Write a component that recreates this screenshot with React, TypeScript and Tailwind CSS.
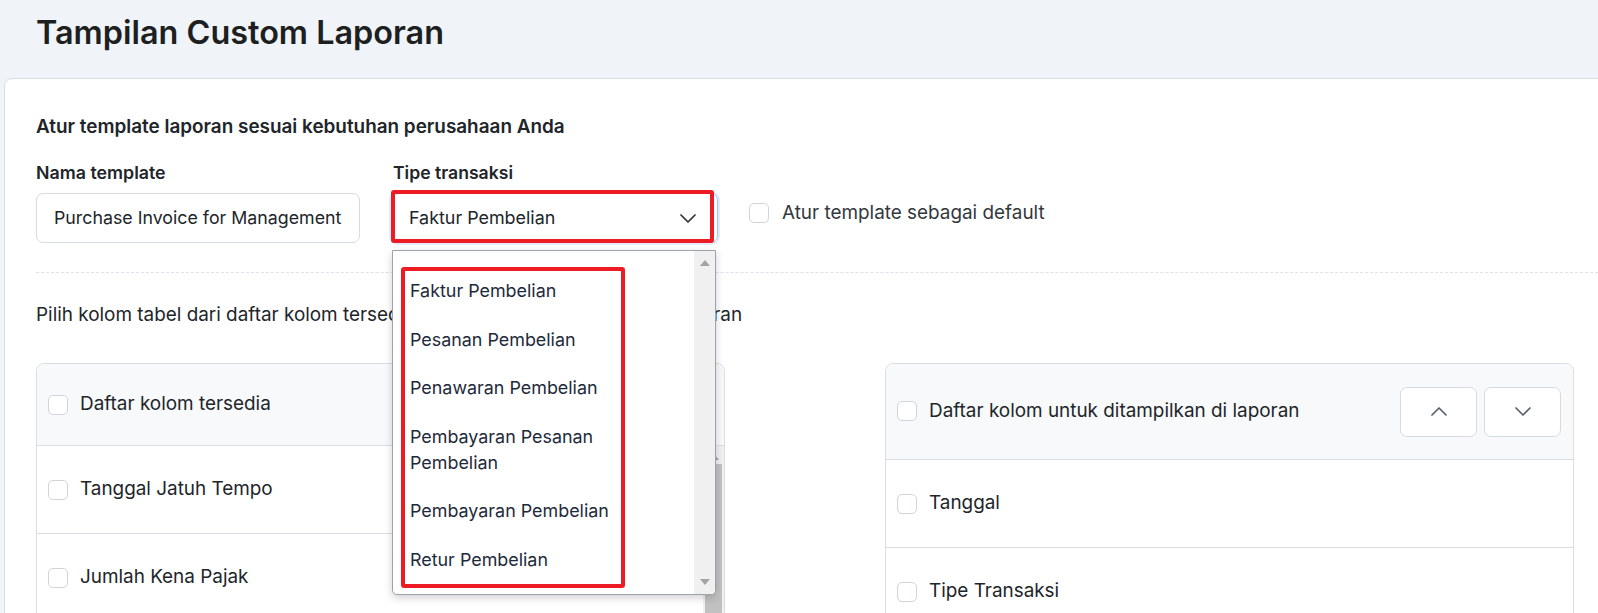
import React from 'react';

const options = [
  'Faktur Pembelian',
  'Pesanan Pembelian',
  'Penawaran Pembelian',
  'Pembayaran Pesanan Pembelian',
  'Pembayaran Pembelian',
  'Retur Pembelian',
];

function Checkbox() {
  return <span className="block w-[20px] h-[20px] shrink-0 rounded-[5px] border-[1.5px] border-[#cfd5dd] bg-white" />;
}

function Chevron({ up = false, className = '' }: { up?: boolean; className?: string }) {
  return (
    <svg viewBox="0 0 16 9" className={className} fill="none" stroke="currentColor" strokeWidth="1.7" strokeLinecap="round" strokeLinejoin="round">
      <polyline points={up ? '1,8 8,1 15,8' : '1,1 8,8 15,1'} />
    </svg>
  );
}

function Arrow({ up = false }: { up?: boolean }) {
  return (
    <svg viewBox="0 0 10 6" className="w-[10px] h-[6px] text-[#a3a3a3]" fill="currentColor">
      <polygon points={up ? '0,6 5,0 10,6' : '0,0 10,0 5,6'} />
    </svg>
  );
}

export default function App() {
  return (
    <div className="h-[613px] w-full overflow-hidden bg-[#f0f3f8] font-['Inter',sans-serif] text-[#212529]">
      <header className="h-[78px] pl-[36px] pt-[13px]">
        <h1 className="text-[32.4px] leading-[40px] font-semibold text-[#1d1f21]">Tampilan Custom Laporan</h1>
      </header>

      <section className="ml-[4px] w-[1640px] min-h-[560px] bg-white border border-[#d9dee5] rounded-tl-[8px] pl-[31px] pt-[35px]">
        <p className="text-[18.9px] leading-[26px] font-semibold">Atur template laporan sesuai kebutuhan perusahaan Anda</p>

        <div className="mt-[20px] flex items-start gap-[31px]">
          <div>
            <label className="block text-[17.8px] leading-[26px] font-semibold mb-[7px]">Nama template</label>
            <div className="w-[324px] h-[50px] border border-[#d5dbe2] rounded-[7px] flex items-center pl-[17px] text-[17.8px]">
              Purchase Invoice for Management
            </div>
          </div>

          <div>
            <label className="block pl-[2px] text-[17.6px] leading-[26px] font-semibold mb-[7px]">Tipe transaksi</label>
            <div className="relative w-[327px] h-[50px]">
              <div className="h-full border border-[#a9c4f2] rounded-[7px] shadow-[0_0_0_2px_#e1ebfc] flex items-center justify-between pl-[17px] pr-[21px] text-[17.9px]">
                <span>Faktur Pembelian</span>
                <Chevron className="w-[16px] h-[9px] text-[#2f3337]" />
              </div>
              <div className="absolute left-0 top-[-3px] w-[323px] h-[53px] border-[4px] border-[#ed1c24] rounded-[3px]" />

              {/* native-looking option list */}
              <div className="absolute left-[1px] top-[57px] z-10 w-[324px] h-[345px] bg-white border border-[#9aa3ae] rounded-b-[5px] shadow-[0_3px_8px_rgba(0,0,0,0.18)] flex">
                <div className="relative flex-1 pt-[16px]">
                  {options.map((o) => (
                    <div key={o} className="pl-[17px] py-[11.25px] text-[17.9px] leading-[26px] text-[#1e2a3b]">
                      <div className="w-[212px]">{o}</div>
                    </div>
                  ))}
                  <div className="absolute left-[8px] top-[16px] w-[224px] h-[321px] border-[4px] border-[#ed1c24] rounded-[3px]" />
                </div>
                <div className="w-[21px] bg-[#f0f0f0] flex flex-col items-center justify-between py-[9px] rounded-br-[4px]">
                  <Arrow up />
                  <Arrow />
                </div>
              </div>
            </div>
          </div>

          <div className="mt-[40px] flex items-center gap-[13px]">
            <Checkbox />
            <span className="text-[18.9px] leading-[26px] text-[#33383d]">Atur template sebagai default</span>
          </div>
        </div>

        <div className="mt-[29px] border-t border-dashed border-[#dfe3e8]" />

        <p className="mt-[29px] text-[18.9px] leading-[26px]">
          Pilih kolom tabel dari daftar kolom tersedia untuk ditampilkan ke bagian laporan
        </p>

        <div className="mt-[35px] flex gap-[160px]">
          {/* available columns */}
          <div className="w-[689px] border border-[#d9dee5] rounded-t-[8px] overflow-hidden">
            <div className="h-[82px] bg-[#f8f9fa] border-b border-[#d9dee5] flex items-center gap-[12px] pl-[11px] text-[18.9px]">
              <Checkbox />
              <span>Daftar kolom tersedia</span>
            </div>
            <div className="flex h-[200px]">
              <div className="flex-1">
                {['Tanggal Jatuh Tempo', 'Jumlah Kena Pajak'].map((c) => (
                  <div key={c} className="h-[88px] border-b border-[#d9dee5] flex items-center gap-[12px] pl-[11px] text-[18.9px]">
                    <Checkbox />
                    <span>{c}</span>
                  </div>
                ))}
              </div>
              <div className="w-[21px] bg-[#f1f1f1] flex flex-col items-center pt-[8px]">
                <Arrow up />
                <div className="mt-[4px] w-[17px] flex-1 bg-[#c1c1c1]" />
              </div>
            </div>
          </div>

          {/* selected columns */}
          <div className="w-[689px] border border-[#d9dee5] rounded-t-[8px] overflow-hidden">
            <div className="h-[96px] bg-[#f8f9fa] border-b border-[#d9dee5] flex items-center justify-between pl-[11px] pr-[12px] text-[18.9px]">
              <div className="flex items-center gap-[12px]">
                <Checkbox />
                <span>Daftar kolom untuk ditampilkan di laporan</span>
              </div>
              <div className="flex gap-[7px]">
                <button className="w-[77px] h-[50px] bg-white border border-[#d5dbe1] rounded-[7px] flex items-center justify-center">
                  <Chevron up className="w-[16px] h-[9px] text-[#59616c]" />
                </button>
                <button className="w-[77px] h-[50px] bg-white border border-[#d5dbe1] rounded-[7px] flex items-center justify-center">
                  <Chevron className="w-[16px] h-[9px] text-[#59616c]" />
                </button>
              </div>
            </div>
            {['Tanggal', 'Tipe Transaksi'].map((c) => (
              <div key={c} className="h-[88px] border-b border-[#d9dee5] flex items-center gap-[12px] pl-[11px] text-[18.9px]">
                <Checkbox />
                <span>{c}</span>
              </div>
            ))}
          </div>
        </div>
      </section>
    </div>
  );
}
